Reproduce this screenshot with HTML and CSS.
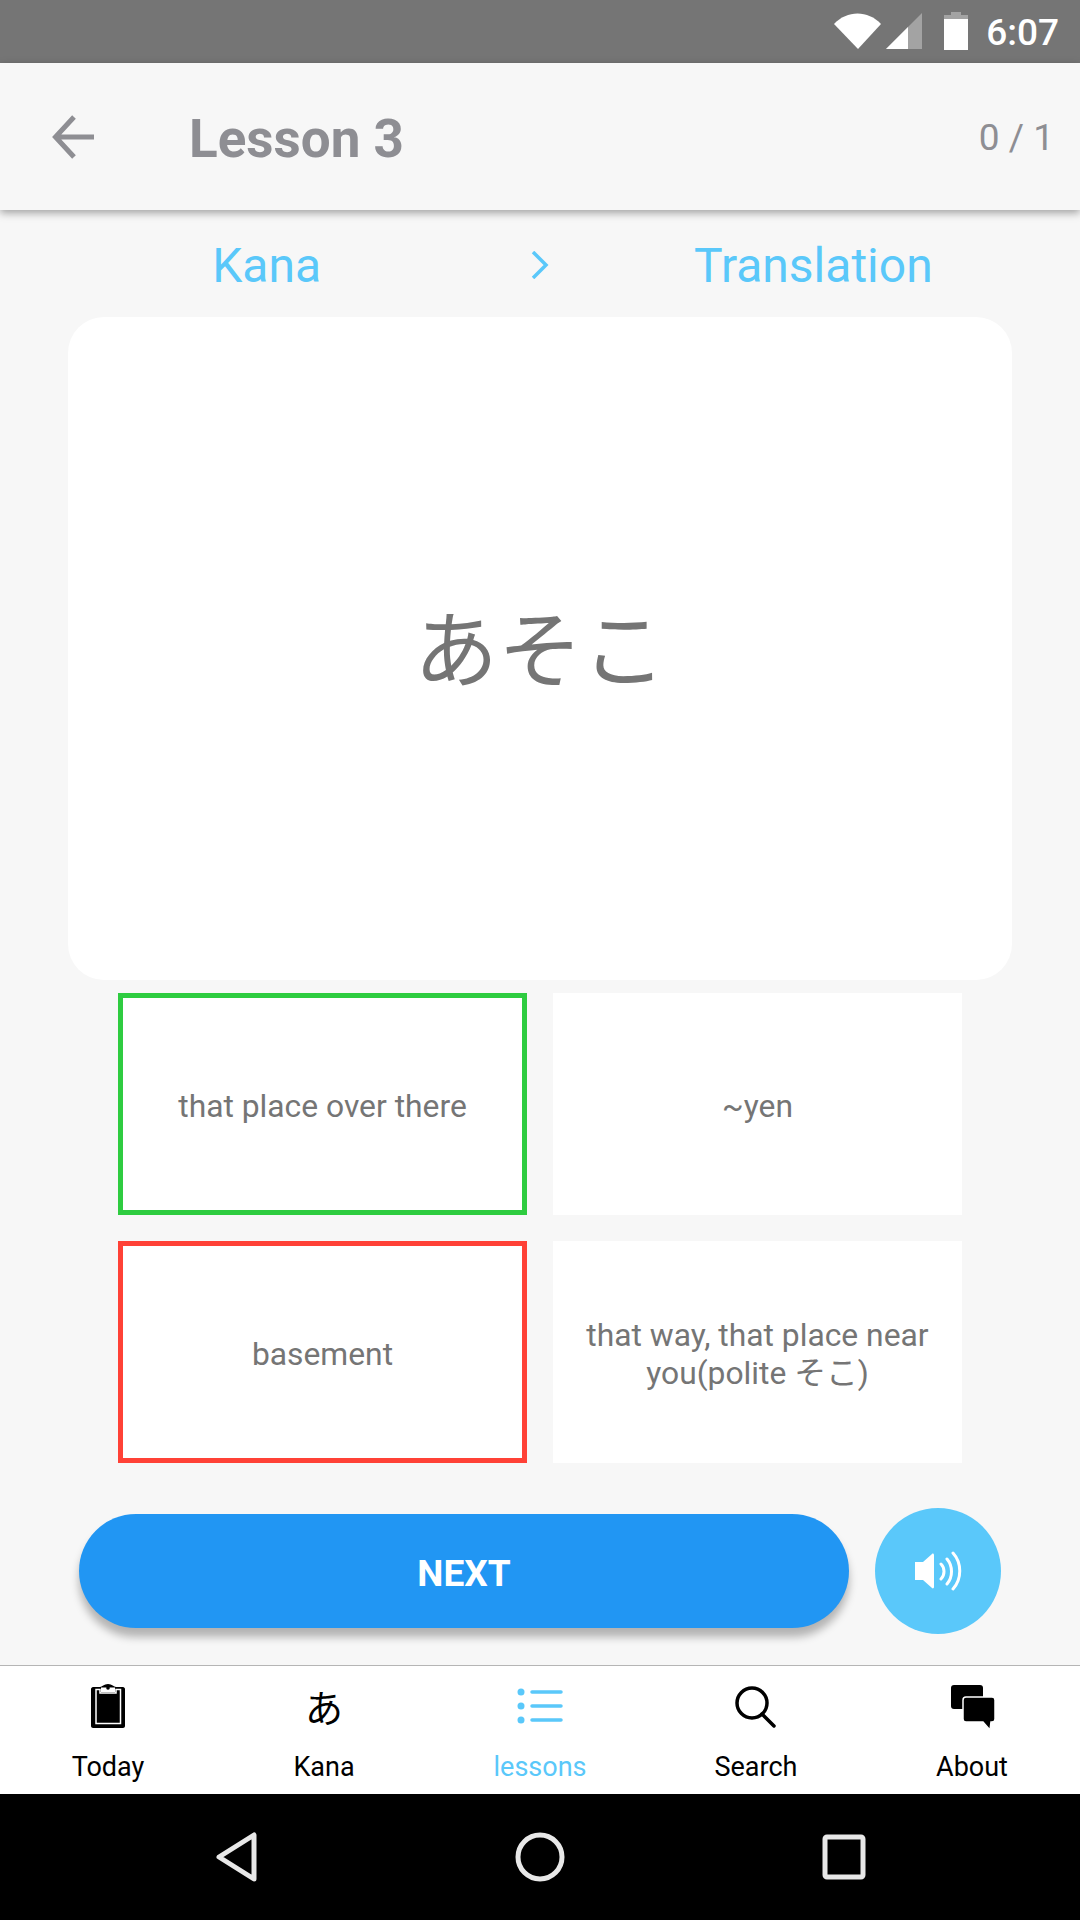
FILE: index.html
```html
<!DOCTYPE html>
<html lang="en">
<head>
<meta charset="utf-8">
<title>Lesson 3</title>
<link rel="stylesheet" href="styles.css">
</head>
<body>
<div class="screen">
  <div class="status">
    <svg class="s-wifi" viewBox="0 0 47 36"><path d="M0 11C13-3 34-3 47 11L24 36Z" fill="#fff"/></svg>
    <svg class="s-signal" viewBox="0 0 36 36"><path d="M36 0V36H0Z" fill="#a3a3a3"/><path d="M22 14V36H0Z" fill="#fff"/></svg>
    <svg class="s-battery" viewBox="0 0 24 38"><path d="M7 0H17V3H24V8H0V3H7Z" fill="#a3a3a3"/><rect y="7" width="24" height="31" fill="#fff"/></svg>
    <span class="s-time">6:07</span>
  </div>
  <header class="head">
    <svg class="back" viewBox="0 0 44 44"><path d="M42 22H5M22 2L3.500 22L22 42" fill="none" stroke="#8e8e93" stroke-width="5"/></svg>
    <h1 class="title">Lesson 3</h1>
    <span class="count">0 / 1</span>
  </header>
  <div class="tabs">
    <span class="tab">Kana</span>
    <svg class="chev" viewBox="0 0 18 28"><path d="M2 1L15 14L2 27" fill="none" stroke="#5ac8fa" stroke-width="3.500"/></svg>
    <span class="tab">Translation</span>
  </div>
  <main class="card"><span class="word">あそこ</span></main>
  <div class="options">
    <div class="opt opt-right">that place over there</div>
    <div class="opt">~yen</div>
    <div class="opt opt-wrong">basement</div>
    <div class="opt">that way, that place near you(polite そこ)</div>
  </div>
  <div class="actions">
    <button class="next">NEXT</button>
    <button class="sound">
      <svg class="sound-i" viewBox="0 0 48 40"><path d="M1 11H9L18 3C19 2 20 3 20 4V36C20 37 19 38 18 37L9 29H1Z" fill="#fff"/><path d="M27 13C31 17 31 24 27 28M33 8C39 15 39 26 33 33M39 2C48 12 48 28 39 38" fill="none" stroke="#fff" stroke-width="3" stroke-linecap="round"/></svg>
    </button>
  </div>
  <nav class="nav">
    <div class="item">
      <svg class="icon" viewBox="0 0 56 52"><path d="M13 7H20C22 7 24 4 28 4S34 7 36 7H43C44 7 45 8 45 9V46C45 47 44 48 43 48H13C12 48 11 47 11 46V9C11 8 12 7 13 7Z" fill="#000"/><path d="M21 7.500H35V12H21Z" fill="#fff"/><circle cx="28" cy="8" r="1.800" fill="#000"/><path d="M17 9.500H20V13H36V9.500H40.500V43.500H16V9.500Z" fill="#000" stroke="#fff" stroke-width="1.500"/></svg>
      <span class="label">Today</span>
    </div>
    <div class="item">
      <span class="icon kana">あ</span>
      <span class="label">Kana</span>
    </div>
    <div class="item item-on">
      <svg class="icon" viewBox="0 0 56 52"><g fill="#5ac8fa"><circle cx="9" cy="12" r="3.500"/><circle cx="9" cy="26" r="3.500"/><circle cx="9" cy="40" r="3.500"/></g><path d="M20 12H49M20 26H49M20 40H49" stroke="#5ac8fa" stroke-width="3.500" stroke-linecap="round"/></svg>
      <span class="label">lessons</span>
    </div>
    <div class="item">
      <svg class="icon" viewBox="0 0 56 52"><circle cx="24" cy="23" r="15" fill="none" stroke="#000" stroke-width="3.500"/><path d="M34 34L46 46" stroke="#000" stroke-width="3.500" stroke-linecap="round"/></svg>
      <span class="label">Search</span>
    </div>
    <div class="item">
      <svg class="icon" viewBox="0 0 56 52"><rect x="7" y="5" width="32" height="24" rx="3" fill="#000"/><path d="M22 17H48C50 17 51 18 51 20V39C51 41 50 42 48 42H47L46 50L39 42H22C20 42 19 41 19 39V20C19 18 20 17 22 17Z" fill="#000" stroke="#fff" stroke-width="1.500"/></svg>
      <span class="label">About</span>
    </div>
  </nav>
  <div class="sysbar">
    <svg class="sys-back" viewBox="0 0 44 52"><path d="M40 4V48L5 26Z" fill="none" stroke="#e8e8e8" stroke-width="5" stroke-linejoin="round"/></svg>
    <svg class="sys-home" viewBox="0 0 52 52"><circle cx="26" cy="26" r="22" fill="none" stroke="#e8e8e8" stroke-width="5"/></svg>
    <svg class="sys-recent" viewBox="0 0 44 46"><rect x="3" y="3" width="38" height="40" rx="2" fill="none" stroke="#e8e8e8" stroke-width="5"/></svg>
  </div>
</div>
</body>
</html>
```

FILE: styles.css
```css
* { box-sizing: border-box; }
html, body { margin: 0; padding: 0; }
body { font-family: Roboto, "Noto Sans CJK JP", sans-serif; background: #f7f7f7; }
.screen { width: 1080px; height: 1920px; display: flex; flex-direction: column; overflow: hidden; background: #f7f7f7; }

.status { height: 63px; background: #757575; display: flex; align-items: flex-start; justify-content: flex-end; padding: 12px 21px 0 0; flex: none; }
.s-wifi { width: 47px; height: 36px; margin-top: 1px; }
.s-signal { width: 36px; height: 36px; margin: 1px 0 0 5px; }
.s-battery { width: 24px; height: 38px; margin-left: 22px; }
.s-time { color: #fff; font-size: 37px; line-height: 42px; font-weight: 500; margin-left: 18px; }

.head { position: relative; z-index: 1; height: 147px; flex: none; background: #f7f7f7; box-shadow: 0 3px 8px rgba(0,0,0,.35); display: flex; align-items: center; padding: 0 26px 0 52px; }
.back { width: 44px; height: 44px; flex: none; }
.title { margin: 4px 0 0 93px; font-size: 53px; font-weight: 700; color: #8e8e93; flex: 1; line-height: 60px; }
.count { font-size: 37px; color: #8e8e93; margin-top: 2px; }

.tabs { height: 107px; flex: none; display: grid; grid-template-columns: 1fr 1fr 1fr; align-items: center; justify-items: center; padding: 3px 130px 0; }
.tab { font-size: 48px; color: #5ac8fa; white-space: nowrap; }
.chev { width: 18px; height: 28px; }

.card { margin: 0 68px; height: 663px; flex: none; background: #fff; border-radius: 36px; display: flex; align-items: center; justify-content: center; padding-bottom: 8px; }
.word { font-size: 84px; color: #757575; }

.options { display: grid; grid-template-columns: 409px 409px; grid-auto-rows: 222px; gap: 26px; padding: 0 118px; margin-top: 13px; flex: none; }
.opt { background: #fff; display: flex; align-items: center; justify-content: center; text-align: center; padding: 4px 20px 0; font-size: 31.800px; line-height: 38px; color: #757575; }
.opt-right { border: 5px solid #2ecc40; }
.opt-wrong { border: 5px solid #ff4136; }

.actions { flex: 1; display: flex; align-items: center; gap: 26px; padding: 14px 0 0 79px; }
.next { width: 770px; height: 114px; border: 0; border-radius: 57px; background: #2196f3; color: #fff; font: 700 37px Roboto, sans-serif; box-shadow: 0 9px 9px rgba(0,0,0,.28); padding: 4px 0 0; }
.sound { width: 126px; height: 126px; border: 0; border-radius: 50%; background: #5ac8fa; padding: 0; display: flex; align-items: center; justify-content: center; }
.sound-i { width: 48px; height: 40px; }

.nav { height: 129px; flex: none; background: #fff; border-top: 1px solid #b5b5b5; display: grid; grid-template-columns: repeat(5, 1fr); }
.item { display: flex; flex-direction: column; align-items: center; padding-top: 14px; color: #000; }
.item-on { color: #5ac8fa; }
.icon { width: 56px; height: 52px; display: block; }
.kana { font-size: 38px; line-height: 58px; text-align: center; }
.label { font-size: 27px; line-height: 30px; margin-top: 20px; }

.sysbar { height: 126px; flex: none; background: #000; display: grid; grid-template-columns: repeat(3, 304px); justify-content: center; justify-items: center; align-items: center; }
.sys-back { width: 44px; height: 52px; }
.sys-home { width: 52px; height: 52px; }
.sys-recent { width: 44px; height: 46px; }
```
